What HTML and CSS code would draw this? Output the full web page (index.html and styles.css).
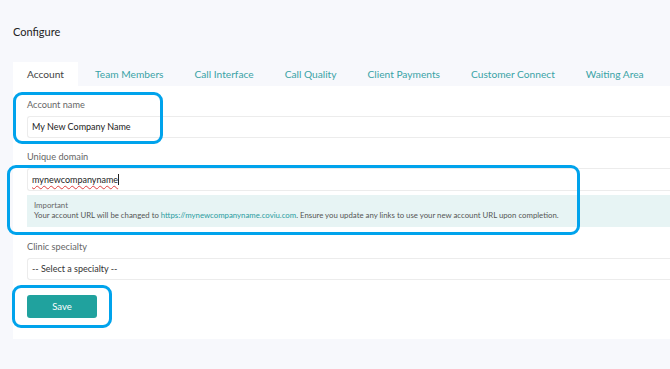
FILE: index.html
```html
<!DOCTYPE html>
<html lang="en">
<head>
  <meta charset="UTF-8" />
  <meta name="viewport" content="width=device-width, initial-scale=1.0"/>
  <title>Configure - Account</title>
  <link rel="stylesheet" href="styles.css">
</head>
<body>
  <div class="page">
    <h1 class="title">Configure</h1>

    <div class="tabs">
      <button class="active">Account</button>
      <button>Team Members</button>
      <button>Call Interface</button>
      <button>Call Quality</button>
      <button>Client Payments</button>
      <button>Customer Connect</button>
      <button>Waiting Area</button>
    </div>

    <div class="panel">
      <label class="field-label">Account name</label>
      <div class="input">My New Company Name</div>

      <label class="field-label">Unique domain</label>
      <div class="input tight"><span class="misspelt">mynewcompanyname</span><span class="caret"></span></div>

      <div class="notice">
        <div class="notice-title">Important</div>
        <div>Your account URL will be changed to <a href="#">https://mynewcompanyname.coviu.com</a>. Ensure you update any links to use your new account URL upon completion.</div>
      </div>

      <label class="field-label">Clinic specialty</label>
      <div class="input select">-- Select a specialty --</div>

      <button class="save-btn">Save</button>
    </div>

    <!-- annotation outlines drawn over the screenshot -->
    <div class="mark mark-name"></div>
    <div class="mark mark-domain"></div>
    <div class="mark mark-save"></div>
  </div>
</body>
</html>
```

FILE: styles.css
```css
body {
  margin: 0;
  background-color: #f7f8fc;
  font-family: 'Lato', 'Open Sans', sans-serif;
  color: #333;
  overflow: hidden;
}

.page {
  position: relative;
  width: 657px;
  padding: 2px 0 30px 13px;
}

.title {
  margin: 0;
  padding-top: 23px;
  height: 37px;
  font-size: 11px;
  font-weight: normal;
  color: #222;
}

.tabs {
  display: flex;
  height: 24px;
}

.tabs button {
  background: none;
  border: none;
  padding: 0 15px 0 16px;
  font-family: inherit;
  font-size: 10.2px;
  color: #3aa3a6;
  cursor: pointer;
}

.tabs button:nth-child(2) {
  padding-left: 17px;
}

.tabs button.active {
  background-color: #fff;
  color: #444;
  padding: 0 14px;
}

.panel {
  background-color: #fff;
  padding: 13px 0 21px 14px;
}

.field-label {
  display: block;
  font-size: 9.2px;
  color: #666;
  height: 12px;
  margin-bottom: 5px;
}

.input {
  box-sizing: border-box;
  height: 22px;
  border: 1px solid #ececec;
  border-right: none;
  border-radius: 3px 0 0 3px;
  padding: 0 4px;
  font-size: 9px;
  line-height: 20px;
  color: #222;
  margin-bottom: 13px;
}

.input.tight {
  height: 23px;
  line-height: 21px;
  margin-bottom: 4px;
}

.misspelt {
  text-decoration: underline wavy #e04040;
  text-decoration-thickness: 1px;
  text-underline-offset: 2px;
}

.caret {
  display: inline-block;
  width: 1px;
  height: 11px;
  background: #222;
  vertical-align: -2px;
}

.notice {
  background-color: #e7f4f4;
  height: 32px;
  box-sizing: border-box;
  padding: 5px 7px;
  font-size: 7.8px;
  line-height: 10px;
  color: #555;
  margin-bottom: 14px;
}

.notice-title {
  color: #666;
}

.notice a {
  color: #2a9c9f;
  text-decoration: none;
}

.select {
  margin-bottom: 14px;
  color: #333;
}

.save-btn {
  width: 70px;
  height: 23px;
  border: none;
  border-radius: 3px;
  background-color: #20a29e;
  color: #fff;
  font-family: inherit;
  font-size: 9.5px;
  cursor: pointer;
}

.mark {
  position: absolute;
  border: 3px solid #00a3ec;
  border-radius: 9px;
  box-sizing: border-box;
}

.mark-name {
  left: 13px;
  top: 92px;
  width: 150px;
  height: 52px;
}

.mark-domain {
  left: 7px;
  top: 165px;
  width: 573px;
  height: 70px;
}

.mark-save {
  left: 12px;
  top: 285px;
  width: 100px;
  height: 43px;
}
```
